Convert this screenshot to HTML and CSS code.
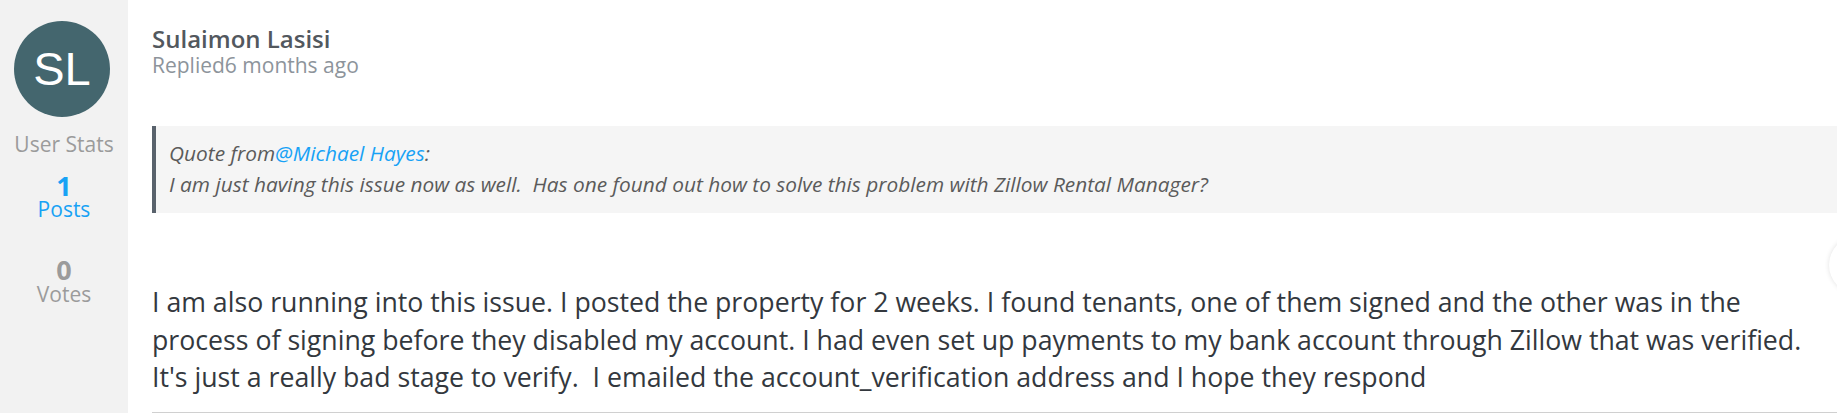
FILE: index.html
```html
<!DOCTYPE html>
<html lang="en">
<head>
  <meta charset="UTF-8">
  <title>Reply - Sulaimon Lasisi</title>
  <link rel="stylesheet" href="styles.css">
</head>
<body>

  <div class="post">
    <aside class="author-side">
      <div class="avatar">SL</div>
      <div class="stats-title">User Stats</div>
      <div class="stat stat-posts">
        <div class="stat-num">1</div>
        <div class="stat-label">Posts</div>
      </div>
      <div class="stat stat-votes">
        <div class="stat-num">0</div>
        <div class="stat-label">Votes</div>
      </div>
    </aside>

    <main class="post-main">
      <div class="author-name">Sulaimon Lasisi</div>
      <div class="post-meta">Replied6 months ago</div>

      <blockquote class="quote">
        <div>Quote from<a href="#">@Michael Hayes</a>:</div>
        <div>I am just having this issue now as well.&nbsp; Has one found out how to solve this problem with Zillow Rental Manager?</div>
      </blockquote>

      <div class="post-body">
        I am also running into this issue. I posted the property for 2 weeks. I found tenants, one of them signed and the other was in the<br>
        process of signing before they disabled my account. I had even set up payments to my bank account through Zillow that was verified.<br>
        It's just a really bad stage to verify.&nbsp; I emailed the account_verification address and I hope they respond
      </div>
    </main>

    <button class="side-toggle" aria-label="Toggle"></button>
  </div>

</body>
</html>
```

FILE: styles.css
```css
html, body {
  margin: 0;
  height: 100%;
  overflow: hidden;
  background: #fff;
}
body {
  font-family: "Open Sans", "Noto Sans", sans-serif;
}
.post {
  position: relative;
  display: flex;
  height: 100%;
}
.author-side {
  width: 128px;
  flex-shrink: 0;
  background: #f2f2f2;
  text-align: center;
  padding-top: 21px;
  box-sizing: border-box;
}
.avatar {
  width: 96px;
  height: 96px;
  margin-left: 14px;
  border-radius: 50%;
  background: #44666e;
  color: #fff;
  font-family: "Liberation Sans", Arial, sans-serif;
  font-size: 47px;
  line-height: 96px;
  text-align: center;
}
.stats-title {
  margin-top: 15px;
  font-size: 21px;
  line-height: 24px;
  color: #9b9b9b;
}
.stat-num {
  font-size: 27px;
  font-weight: 700;
  line-height: 24px;
}
.stat-label {
  font-size: 21px;
  line-height: 22px;
}
.stat-posts {
  margin-top: 18px;
  color: #18a2f5;
}
.stat-votes {
  margin-top: 38px;
  color: #9b9b9b;
}
.stat-votes .stat-label {
  margin-top: 1px;
}
.post-main {
  flex: 1;
  padding: 25px 0 0 24px;
  min-width: 0;
}
.author-name {
  font-size: 24px;
  font-weight: 600;
  line-height: 27px;
  color: #52585e;
}
.post-meta {
  font-size: 21px;
  line-height: 27px;
  color: #8d949b;
}
.quote {
  margin: 47px 0 0 0;
  padding: 12px 0 13px 13px;
  border-left: 4px solid #59626c;
  background: #f5f5f5;
  font-size: 20.85px;
  line-height: 31px;
  font-style: italic;
  color: #5b5b5b;
}
.quote a {
  color: #18a2f5;
  text-decoration: none;
}
.post-body {
  margin-top: 70px;
  padding-bottom: 16px;
  border-bottom: 2px solid #d0d0d0;
  font-size: 26.7px;
  line-height: 37.5px;
  white-space: nowrap;
  color: #33383e;
}
.side-toggle {
  position: absolute;
  right: -50px;
  top: 236px;
  width: 58px;
  height: 58px;
  border: none;
  border-radius: 50%;
  background: #fff;
  box-shadow: 0 0 5px rgba(0, 0, 0, 0.12);
}
```
